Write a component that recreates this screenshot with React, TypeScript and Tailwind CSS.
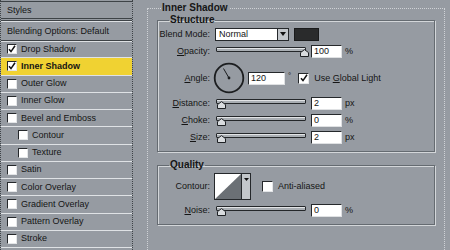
import React from "react";

const items = [
  { label: "Drop Shadow", checked: true },
  { label: "Inner Shadow", checked: true, active: true },
  { label: "Outer Glow" },
  { label: "Inner Glow" },
  { label: "Bevel and Emboss" },
  { label: "Contour", sub: true },
  { label: "Texture", sub: true },
  { label: "Satin" },
  { label: "Color Overlay" },
  { label: "Gradient Overlay" },
  { label: "Pattern Overlay" },
  { label: "Stroke" },
];

function Check({ checked, big }: { checked?: boolean; big?: boolean }) {
  return (
    <span
      className={
        (big ? "w-[11px] h-[11px] " : "w-[10px] h-[10px] ") +
        "shrink-0 bg-white border border-t-[#25282b] border-l-[#25282b] border-r-[#e4e6e8] border-b-[#e4e6e8] flex items-center justify-center"
      }
    >
      {checked && (
        <svg width="8" height="8" viewBox="0 0 8 8">
          <path d="M1 4.2 L3 6.6 L7 0.8" stroke="#111" strokeWidth="1.5" fill="none" />
        </svg>
      )}
    </span>
  );
}

function Slider({ pos }: { pos: "left" | "right" }) {
  return (
    <div className="relative w-[90px] h-[14px] ml-[6px]">
      <div className="mt-[3px] h-[5px] border border-[#24272a] rounded-[1px] bg-[#a9aeb3] shadow-[inset_0_1px_0_#e2e4e6]" />
      <svg
        width="9"
        height="8"
        viewBox="0 0 9 8"
        className={"absolute top-[5px] " + (pos === "left" ? "left-[1px]" : "left-[84px]")}
      >
        <path d="M0.5 7.5 V3.6 L4.5 0.6 L8.5 3.6 V7.5 Z" fill="#d9dcdf" stroke="#1e2124" strokeWidth="1" />
      </svg>
    </div>
  );
}

function Field({ value, w = "w-[31px]" }: { value: string; w?: string }) {
  return (
    <div
      className={
        w +
        " h-[13px] bg-white border border-t-[#25282b] border-l-[#25282b] border-r-[#dfe1e3] border-b-[#dfe1e3] pl-[2px] flex items-center text-[9px]"
      }
    >
      {value}
    </div>
  );
}

function Label({ children }: { children: React.ReactNode }) {
  return <div className="w-[52px] shrink-0 text-right">{children}</div>;
}

function SliderRow({
  label,
  value,
  unit,
  pos,
  mt,
}: {
  label: React.ReactNode;
  value: string;
  unit: string;
  pos: "left" | "right";
  mt: string;
}) {
  return (
    <div className={mt + " h-[14px] flex items-center"}>
      <Label>{label}</Label>
      <Slider pos={pos} />
      <div className="ml-[5px]">
        <Field value={value} />
      </div>
      <span className="ml-[3px]">{unit}</span>
    </div>
  );
}

export default function App() {
  return (
    <div className="w-[450px] h-[250px] overflow-hidden bg-[#969ba2] flex text-[#151515] text-[9px] leading-none font-['Liberation_Sans',Arial,sans-serif]">
      {/* left: style list */}
      <div className="w-[133px] shrink-0 h-full flex flex-col border-l border-r border-dotted border-[#3e4347] pt-[1px]">
        <div className="h-[20px] flex items-center pl-[6px] border-t border-b-[3px] border-double border-[#3e4347] shadow-[0_1px_0_#dde0e3]">
          Styles
        </div>
        <div className="mt-[2px] h-[18px] flex items-center pl-[6px] border-b border-[#3e4347] shadow-[0_1px_0_#dde0e3]">
          Blending Options: Default
        </div>
        <div className="h-[207px] flex flex-col">
          {items.map((it) => (
            <div
              key={it.label}
              className={
                "flex-1 flex items-center border-b border-[#dfe2e5] " +
                (it.sub ? "pl-[17px] " : "pl-[6px] ") +
                (it.active ? "bg-[#f0d232] font-bold" : "")
              }
            >
              <Check checked={it.checked} />
              <span className="ml-[4px]">{it.label}</span>
            </div>
          ))}
        </div>
      </div>

      {/* right: settings */}
      <div className="flex-1 pl-[14px] pr-[5px]">
        <fieldset className="mt-[2px] h-[270px] border border-dotted border-[#cfd2d6] px-[9px]">
          <legend className="ml-[4px] px-[1px] font-bold text-[10px] leading-[12px]">Inner Shadow</legend>

          <fieldset className="border border-[#656b71] shadow-[inset_1px_1px_0_#d3d6d9,1px_1px_0_#d3d6d9] pb-[7px]">
            <legend className="ml-[11px] px-[1px] font-bold text-[10px] leading-[12px]">Structure</legend>

            <div className="mt-[1px] h-[14px] flex items-center">
              <Label>Blend Mode:</Label>
              <div className="ml-[5px] w-[74px] h-[13px] bg-white border border-[#25282b] flex items-center">
                <span className="flex-1 pl-[3px]">Normal</span>
                <span className="w-[11px] h-full bg-[#c3c7cb] border-l border-[#25282b] flex items-center justify-center">
                  <svg width="6" height="4" viewBox="0 0 6 4">
                    <path d="M0 0 H6 L3 4 Z" fill="#111" />
                  </svg>
                </span>
              </div>
              <div className="ml-[5px] w-[25px] h-[13px] bg-[#2a2b2c] border border-[#1a1b1c]" />
            </div>

            <SliderRow
              mt="mt-[3px]"
              label={<><u>O</u>pacity:</>}
              value="100"
              unit="%"
              pos="right"
            />

            <div className="mt-[4px] h-[32px] flex items-center">
              <Label>
                <u>A</u>ngle:
              </Label>
              <svg width="32" height="32" viewBox="0 0 32 32" className="ml-[3px] shrink-0">
                <circle cx="16" cy="16" r="14.3" stroke="#1c1e20" strokeWidth="1.8" fill="none" />
                <line x1="16" y1="16" x2="10.5" y2="6.5" stroke="#1c1e20" strokeWidth="1" />
                <circle cx="16" cy="16" r="1.4" fill="#1c1e20" />
              </svg>
              <div className="ml-[3px]">
                <Field value="120" w="w-[37px]" />
              </div>
              <span className="ml-[3px] self-start mt-[10px] text-[8px]">°</span>
              <div className="ml-[7px]">
                <Check checked big />
              </div>
              <span className="ml-[5px]">
                Use <u>G</u>lobal Light
              </span>
            </div>

            <SliderRow mt="mt-[2px]" label={<><u>D</u>istance:</>} value="2" unit="px" pos="left" />
            <SliderRow mt="mt-[3px]" label={<><u>C</u>hoke:</>} value="0" unit="%" pos="left" />
            <SliderRow mt="mt-[3px]" label={<><u>S</u>ize:</>} value="2" unit="px" pos="left" />
          </fieldset>

          <fieldset className="mt-[7px] border border-[#656b71] shadow-[inset_1px_1px_0_#d3d6d9,1px_1px_0_#d3d6d9] pb-[7px]">
            <legend className="ml-[11px] px-[1px] font-bold text-[10px] leading-[12px]">Quality</legend>

            <div className="mt-[1px] h-[28px] flex items-center">
              <Label>Contour:</Label>
              <div className="ml-[4px] h-[27px] flex border border-[#25282b] bg-white">
                <svg width="26" height="25" viewBox="0 0 26 25">
                  <rect width="26" height="25" fill="#ffffff" />
                  <path d="M0 25 L26 0 V25 Z" fill="#6b7075" />
                </svg>
                <span className="w-[9px] bg-[#c3c7cb] border-l border-[#25282b] flex justify-center pt-[4px]">
                  <svg width="5" height="3" viewBox="0 0 5 3">
                    <path d="M0 0 H5 L2.5 3 Z" fill="#111" />
                  </svg>
                </span>
              </div>
              <div className="ml-[11px]">
                <Check big />
              </div>
              <span className="ml-[5px]">Anti-aliased</span>
            </div>

            <SliderRow mt="mt-[3px]" label={<><u>N</u>oise:</>} value="0" unit="%" pos="left" />
          </fieldset>
        </fieldset>
      </div>
    </div>
  );
}
